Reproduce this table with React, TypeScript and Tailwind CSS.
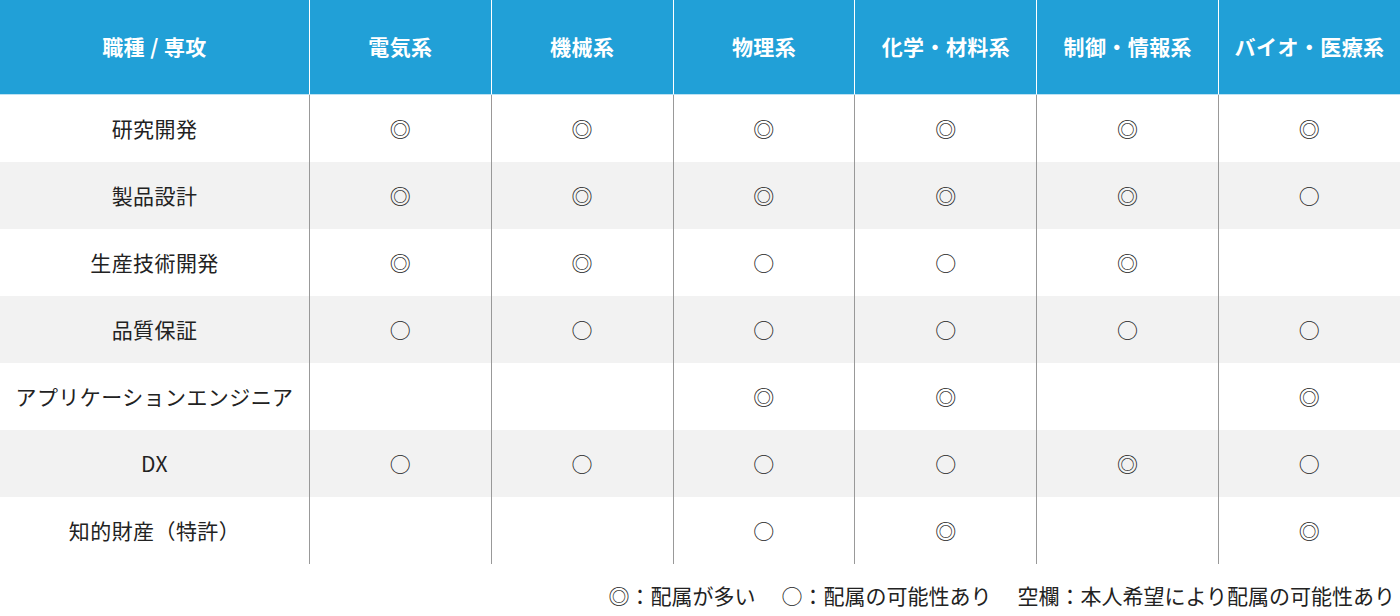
const majors = ['電気系', '機械系', '物理系', '化学・材料系', '制御・情報系', 'バイオ・医療系'];

const rows: { job: string; marks: string[] }[] = [
  { job: '研究開発', marks: ['◎', '◎', '◎', '◎', '◎', '◎'] },
  { job: '製品設計', marks: ['◎', '◎', '◎', '◎', '◎', '○'] },
  { job: '生産技術開発', marks: ['◎', '◎', '○', '○', '◎', ''] },
  { job: '品質保証', marks: ['○', '○', '○', '○', '○', '○'] },
  { job: 'アプリケーションエンジニア', marks: ['', '', '◎', '◎', '', '◎'] },
  { job: 'DX', marks: ['○', '○', '○', '○', '◎', '○'] },
  { job: '知的財産（特許）', marks: ['', '', '○', '◎', '', '◎'] },
];

export default function App() {
  return (
    <div
      className="w-[1400px] h-[616px] bg-white text-[#222] text-[21px] tracking-[0.02em] overflow-hidden"
      style={{ fontFamily: '"Noto Sans CJK JP", "Noto Sans", sans-serif' }}
    >
      {/* header */}
      <div className="grid grid-cols-[309px_repeat(6,minmax(0,1fr))] h-[95px] bg-[#21a0d7] border-b border-[#bde2f3] text-white font-bold">
        <div className="flex items-center justify-center">職種 / 専攻</div>
        {majors.map((m) => (
          <div key={m} className="flex items-center justify-center border-l border-white">
            {m}
          </div>
        ))}
      </div>

      {/* body */}
      <div>
        {rows.map((r, i) => (
          <div
            key={r.job}
            className={`grid grid-cols-[309px_repeat(6,minmax(0,1fr))] h-[67px] ${
              i % 2 === 1 ? 'bg-[#f2f2f2]' : 'bg-white'
            }`}
          >
            <div className="flex items-center justify-center">{r.job}</div>
            {r.marks.map((mark, j) => (
              <div key={j} className="flex items-center justify-center border-l border-[#999]">
                {mark}
              </div>
            ))}
          </div>
        ))}
      </div>

      {/* legend */}
      <div className="mt-[19px] pr-[5px] flex justify-end gap-[26px] leading-[24px] tracking-normal">
        <span>◎：配属が多い</span>
        <span>○：配属の可能性あり</span>
        <span>空欄：本人希望により配属の可能性あり</span>
      </div>
    </div>
  );
}
